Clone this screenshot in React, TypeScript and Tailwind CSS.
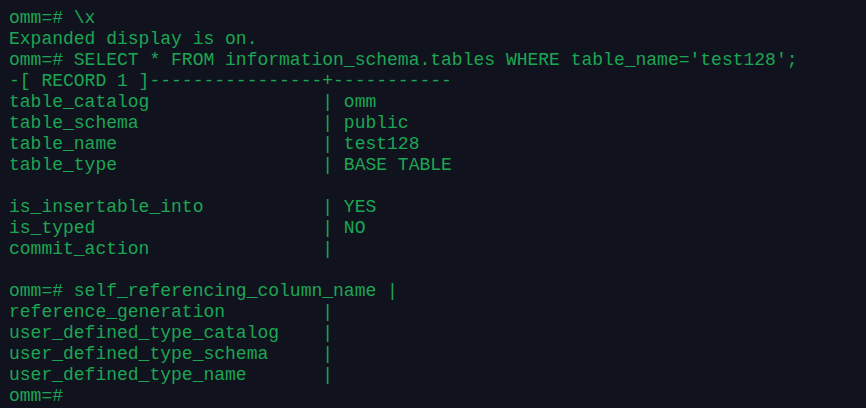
const lines = [
  "omm=# \\x",
  "Expanded display is on.",
  "omm=# SELECT * FROM information_schema.tables WHERE table_name='test128';",
  "-[ RECORD 1 ]----------------+-----------",
  "table_catalog                | omm",
  "table_schema                 | public",
  "table_name                   | test128",
  "table_type                   | BASE TABLE",
  "",
  "is_insertable_into           | YES",
  "is_typed                     | NO",
  "commit_action                |",
  "",
  "omm=# self_referencing_column_name |",
  "reference_generation         |",
  "user_defined_type_catalog    |",
  "user_defined_type_schema     |",
  "user_defined_type_name       |",
  "omm=#",
];

export default function App() {
  return (
    <div className="w-[866px] h-[408px] overflow-hidden bg-[#10131e] pt-[8px] pl-[9px]">
      <pre
        className="m-0 text-[18px] leading-[21px] text-[#1ca653] whitespace-pre"
        style={{ fontFamily: '"Liberation Mono", "Courier New", monospace' }}
      >
        {lines.map((l, i) => (
          <div key={i} className="h-[21px]">{l}</div>
        ))}
      </pre>
    </div>
  );
}
